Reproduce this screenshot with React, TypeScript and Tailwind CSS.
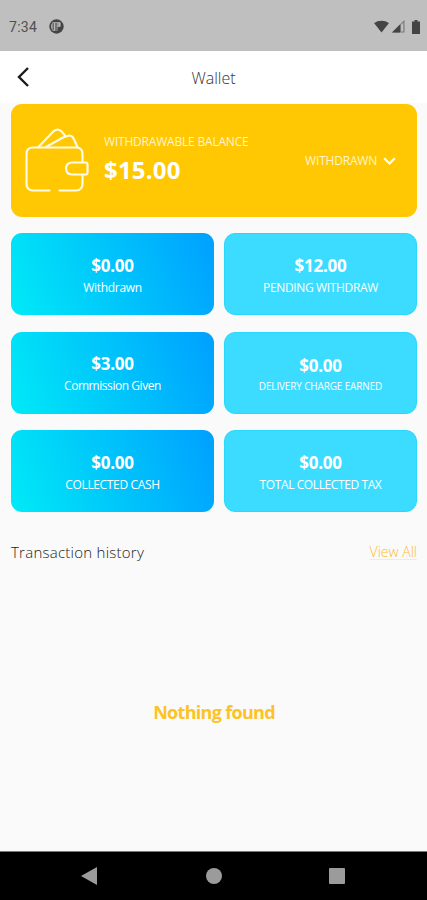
import clsx from "clsx";

const tiles = [
  {
    amount: "$0.00",
    label: "Withdrawn",
    labelClass: "text-[12px] leading-[20px] tracking-[-0.3px]",
  },
  {
    amount: "$12.00",
    label: "PENDING WITHDRAW",
    labelClass: "text-[12px] leading-[20px] tracking-[-0.35px]",
  },
  {
    amount: "$3.00",
    label: "Commission Given",
    labelClass: "text-[12px] leading-[20px] tracking-[-0.45px]",
  },
  {
    amount: "$0.00",
    label: "DELIVERY CHARGE EARNED",
    labelClass: "text-[10px] leading-[16px] tracking-[-0.15px]",
  },
  {
    amount: "$0.00",
    label: "COLLECTED CASH",
    labelClass: "text-[12px] leading-[20px] tracking-[-0.35px]",
  },
  {
    amount: "$0.00",
    label: "TOTAL COLLECTED TAX",
    labelClass: "text-[12px] leading-[20px] tracking-[-0.4px]",
  },
];

const StatusBar = () => {
  return (
    <div className="flex h-[51px] shrink-0 items-center justify-between bg-[#bfbfbf] pl-[9px] pr-[7px] pt-[2px] text-[#444444]">
      <div className="flex items-center gap-[11px]">
        <span className="w-[29px] whitespace-nowrap font-['Roboto',sans-serif] text-[14px] leading-none tracking-[0.3px] text-[#505050]">
          7:34
        </span>
        <svg width="15" height="15" viewBox="0 0 15 15">
          <circle cx="7.5" cy="7.5" r="7.2" fill="#444444" />
          <path d="M3.6 3.2h7.9v4.6H8.4v3.9H3.6C1.6 9.5 1.6 5.5 3.6 3.2z" fill="#bfbfbf" />
          <path d="M3.6 4h1.1v7H3.6zM6.4 4h1.2v7.7H6.4z" fill="#444444" />
          <path d="M8.4 4.2h1.1v2.6H8.4z" fill="#777777" />
        </svg>
      </div>
      <div className="flex items-center">
        <svg width="15" height="13" viewBox="0 0 15 13">
          <path d="M0 3.1C4.4-.2 10.6-.2 15 3.1L7.5 12.5z" fill="#444444" />
        </svg>
        <svg className="ml-[3px]" width="13" height="13" viewBox="0 0 13 13">
          <path d="M0 12.5L12.5 0v12.5z" fill="#777777" />
          <path d="M0 12.5L8 4.5v8z" fill="#444444" />
          <path d="M9 4.8l2.4-2.4v9H9z" fill="#bfbfbf" />
        </svg>
        <svg className="ml-[7px]" width="8" height="14" viewBox="0 0 8 14">
          <path d="M2.5 0h3v1.5H8V14H0V1.5h2.5z" fill="#444444" />
        </svg>
      </div>
    </div>
  );
};

const WalletIcon = () => {
  return (
    <svg
      className="shrink-0"
      width="66"
      height="66"
      viewBox="0 0 66 66"
      fill="none"
      stroke="#fffae5"
      strokeWidth="2.2"
      strokeLinecap="round"
      strokeLinejoin="round"
    >
      <path d="M25.5 62.5H9Q2.5 62 2.5 56V26Q2.5 19.5 9 19.5H52Q58.5 19.5 58.5 26V34" />
      <path d="M58.5 47V56Q58.5 62 52 62.5H35.5" />
      <path d="M48 34.5H61.5Q63.5 34.5 63.5 36.5V44.5Q63.5 46.5 61.5 46.5H48Q42 46 42 40.5T48 34.5z" />
      <path d="M14.5 19L29.5 3.3Q33.5 -.2 37.5 3.4L41 7.5" />
      <path d="M22 19L39.5 9.2L45.5 7.5Q48.6 7.8 49.8 11L53.5 19" />
    </svg>
  );
};

const App = () => {
  return (
    <div className="flex h-[900px] w-[427px] flex-col overflow-hidden bg-[#fafafa] font-['Open_Sans','Noto_Sans',sans-serif]">
      <StatusBar />

      <header className="grid h-[52px] shrink-0 grid-cols-[1fr_auto_1fr] items-center bg-white">
        <svg className="ml-[16px]" width="14" height="20" viewBox="0 0 14 20">
          <path
            d="M12 1L3 10l9 9"
            fill="none"
            stroke="#1b1b1b"
            strokeWidth="2.4"
          />
        </svg>
        <h1 className="pt-[2px] text-[16px] font-light leading-[20px] text-[#333333]">
          Wallet
        </h1>
      </header>

      <main className="flex grow flex-col pl-[11px] pr-[10px]">
        <section className="mt-px flex h-[113px] shrink-0 items-center rounded-[11px] bg-[#ffc803] pl-[13px] pr-[21px] text-white">
          <WalletIcon />
          <div className="-mt-[4px] ml-[14px] grow">
            <p className="whitespace-nowrap text-[12px] font-normal leading-[16px] tracking-[-0.2px] text-[#fff4cc]">
              WITHDRAWABLE BALANCE
            </p>
            <p className="mt-[7px] text-[24px] font-bold leading-[26px] tracking-[0.2px]">
              $15.00
            </p>
          </div>
          <button className="flex items-center gap-[6px] text-[12px] font-normal tracking-[-0.2px] text-[#fff4cc]">
            WITHDRAWN
            <svg width="13" height="8" viewBox="0 0 13 8">
              <path
                d="M1.2 1.2l5.3 5.3 5.3-5.3"
                fill="none"
                stroke="#ffffff"
                strokeWidth="2.2"
              />
            </svg>
          </button>
        </section>

        <section className="mt-[16px] grid grid-cols-[203px_193px] gap-x-[10px] gap-y-[16.5px]">
          {tiles.map((tile, index) => (
            <div
              key={tile.label}
              className={clsx(
                "flex h-[82px] flex-col items-center justify-center rounded-[11px] pt-[3px] text-white",
                index % 2 === 0
                  ? "bg-linear-[70deg] from-[#00eaf7] to-[#00a0ff]"
                  : "border border-[#2ad7fd] bg-[#3bdcff]"
              )}
            >
              <p className="text-[17px] font-bold leading-[24px] tracking-[-0.2px]">
                {tile.amount}
              </p>
              <p className={clsx("whitespace-nowrap", tile.labelClass)}>
                {tile.label}
              </p>
            </div>
          ))}
        </section>

        <div className="mt-[28px] flex items-center justify-between leading-[22px]">
          <h2 className="text-[15px] font-light tracking-[0.25px] text-[#222222]">
            Transaction history
          </h2>
          <a className="pt-px text-[14px] font-light text-[#ffb938] underline decoration-[#ffe9c4] underline-offset-2">
            View All
          </a>
        </div>

        <p className="mt-[136px] text-center text-[18px] font-bold leading-[26px] tracking-[-0.7px] text-[#fdc324]">
          Nothing found
        </p>
      </main>

      <nav className="flex h-[49px] shrink-0 items-center border-t border-[#777777] bg-black pl-[81px]">
        <svg width="17" height="18" viewBox="0 0 17 18">
          <path d="M0 9L16 0v18z" fill="#9b9b9b" />
        </svg>
        <span className="ml-[108px] h-[16px] w-[16px] rounded-full bg-[#9b9b9b]" />
        <span className="ml-[107px] h-[16px] w-[16px] rounded-[1px] bg-[#9b9b9b]" />
      </nav>
    </div>
  );
};

export default App;
